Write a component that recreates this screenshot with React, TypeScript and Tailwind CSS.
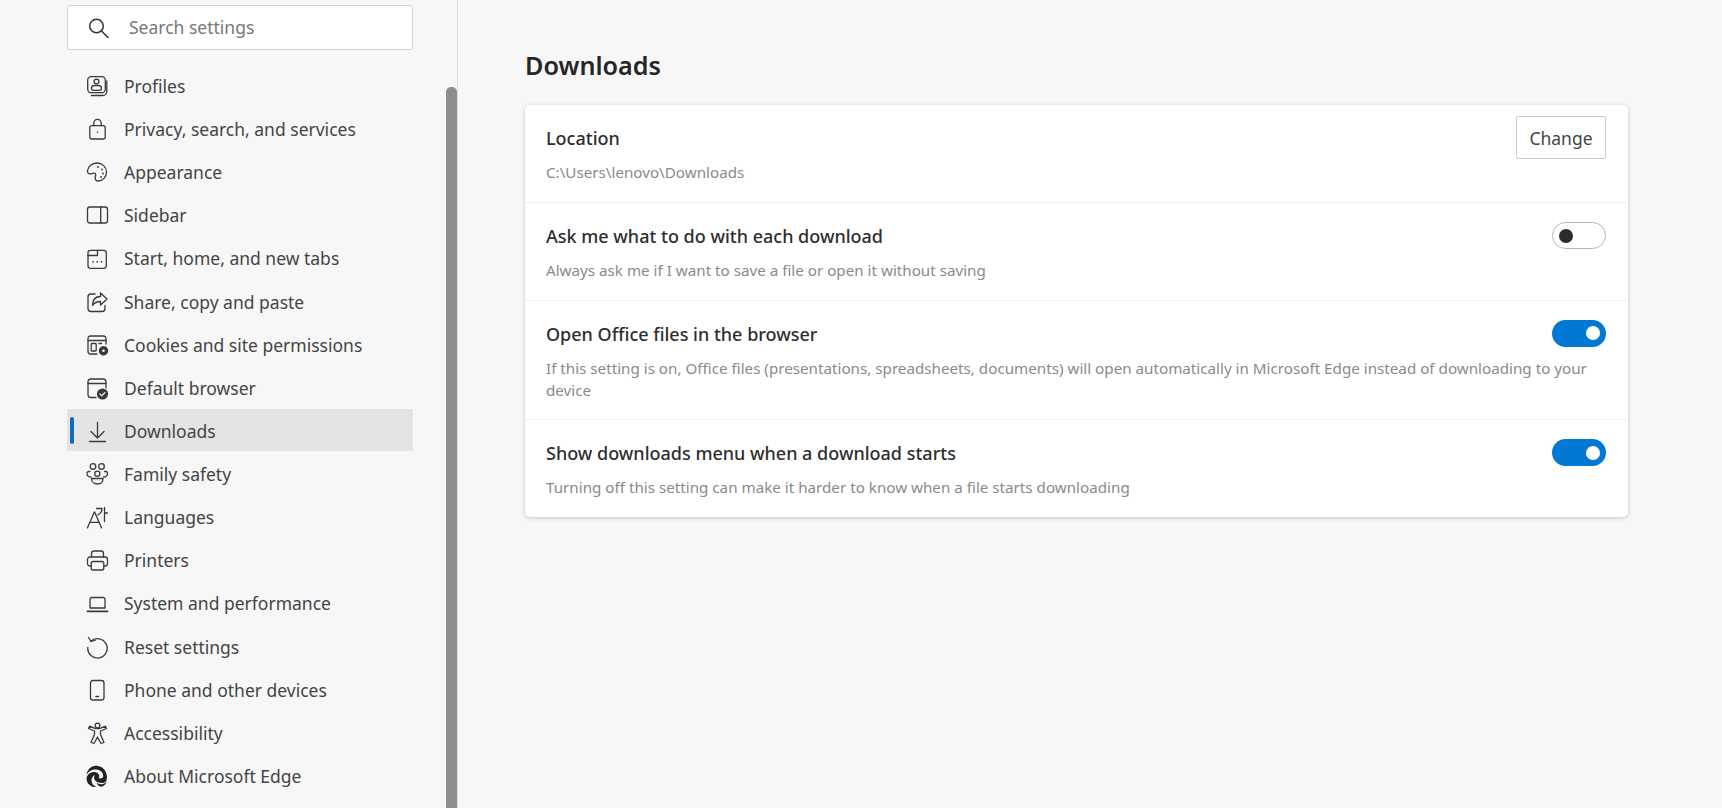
import React from "react";

const S = ({ children }: { children: React.ReactNode }) => (
  <svg viewBox="0 0 24 24" width="24" height="24" fill="none" stroke="#3a3a3a" strokeWidth="1.3" strokeLinecap="round" strokeLinejoin="round" className="relative shrink-0">
    {children}
  </svg>
);

const d = "#3a3a3a";
const icons: Record<string, React.ReactNode> = {
  Profiles: (<S><rect x="2.700" y="2.700" width="17.600" height="16" rx="3.500" /><path d="M21.800 7v10.500a4 4 0 0 1-4 4H6.500" /><circle cx="11.500" cy="7.500" r="2.400" /><path d="M6.500 14.500c0-2 1.500-3 3-3h4c1.500 0 3 1 3 3 0 1-1 1.800-2.500 1.800h-5C7.500 16.300 6.500 15.500 6.500 14.500z" /></S>),
  Privacy: (<S><rect x="4.800" y="8.700" width="15.400" height="13.300" rx="2" /><path d="M8.800 8.700V6a3.700 3.700 0 0 1 7.400 0v2.700" /><circle cx="12.500" cy="15.300" r="0.800" fill={d} stroke="none" /></S>),
  Appearance: (<S><path d="M12 3c5.300 0 9.500 4 9.500 9s-3.900 9-8 9c-2.400 0-3.300-1.500-3.300-3 0-1.200.5-2 .5-3 0-1.200-1-1.800-2-1.800-1.300 0-2 .7-3.700.7-1.800 0-2.800-1.500-2.500-3.200C3.200 6.700 7 3 12 3z" /><circle cx="13" cy="7" r="0.900" fill={d} stroke="none" /><circle cx="17" cy="9.500" r="0.900" fill={d} stroke="none" /><circle cx="18" cy="13.500" r="0.900" fill={d} stroke="none" /><circle cx="16" cy="17" r="0.900" fill={d} stroke="none" /></S>),
  Sidebar: (<S><rect x="2.500" y="4" width="20" height="16" rx="2.300" /><path d="M15.700 4v16" /></S>),
  Start: (<S><rect x="3" y="3.300" width="18.300" height="18" rx="2.500" /><path d="M3 8.500h9.500V3.300" /><circle cx="8" cy="14.800" r="0.900" fill={d} stroke="none" /><circle cx="12.200" cy="14.800" r="0.900" fill={d} stroke="none" /><circle cx="16.400" cy="14.800" r="0.900" fill={d} stroke="none" /></S>),
  Share: (<S><path d="M10 4H6a3 3 0 0 0-3 3v11.500a3 3 0 0 0 3 3h11a3 3 0 0 0 3-3v-3" /><path d="M15.500 3l6.500 6-6.500 6v-3.500c-3.700 0-6 1-8 4 0-5 2.500-9 8-9z" /></S>),
  Cookies: (<S><path d="M12 21H5.500A2.500 2.500 0 0 1 3 18.500V5.500A2.500 2.500 0 0 1 5.500 3h13A2.500 2.500 0 0 1 21 5.500V11" /><path d="M3 7.500h18" /><rect x="6.200" y="10.500" width="5" height="7.500" rx="0.800" /><path d="M14 10.500h2.500" /><circle cx="18.500" cy="17.800" r="3.800" fill={d} stroke={d} strokeWidth="1.800" strokeDasharray="1.600 0.800" /><circle cx="18.500" cy="17.800" r="1.300" fill="#f7f7f7" stroke="none" /></S>),
  Default: (<S><path d="M11 21.500H6a3 3 0 0 1-3-3V6a3 3 0 0 1 3-3h12a3 3 0 0 1 3 3v6" /><path d="M3 7.500h18" /><circle cx="17.500" cy="18" r="5.600" fill={d} stroke="none" /><path d="M15 18l1.800 1.800 3.200-3.400" stroke="#f7f7f7" strokeWidth="1.200" /></S>),
  Downloads: (<S><path d="M12.500 3.500v15M6 12.500l6.500 6.500 6.500-6.500" /><path d="M4.500 22.500h16" /></S>),
  Family: (<S><circle cx="8" cy="4.500" r="2.800" /><circle cx="16.500" cy="4.500" r="2.800" /><circle cx="12.300" cy="11.800" r="2.600" /><path d="M5 9.500H3.800C2.500 9.500 2 10.500 2 11.500c0 2 1.500 3.500 4 3.500" /><path d="M19.500 9.500h1.200c1.300 0 1.800 1 1.800 2 0 2-1.500 3.500-4 3.500" /><path d="M6.500 16.500h11.500c0 3.500-2.500 5.500-5.700 5.500s-5.800-2-5.800-5.500z" /></S>),
  Languages: (<S><path d="M2.500 22.800L9.500 6.800l7 16M5 17.300h9" /><path d="M11.500 3.500h5.500c0 3-1.500 5-4 6.300" /><path d="M19.500 2.500v14M19.500 8h3" /></S>),
  Printers: (<S><path d="M6.500 9V5.500a2.500 2.500 0 0 1 2.500-2.500h7a2.500 2.500 0 0 1 2.500 2.500V9" /><path d="M6 18H5a2.500 2.500 0 0 1-2.500-2.500V11.500A2.500 2.500 0 0 1 5 9h15a2.500 2.500 0 0 1 2.500 2.500v4A2.500 2.500 0 0 1 20 18h-1" /><rect x="6.200" y="13.500" width="12.600" height="8.500" rx="2" /></S>),
  System: (<S><path d="M5 16V7.500A2 2 0 0 1 7 5.500h11a2 2 0 0 1 2 2V16z" /><path d="M2.500 19.300h20" strokeWidth="1.800" /></S>),
  Reset: (<S><path d="M5.800 6.300A9.700 9.700 0 1 1 2.800 12.500" /><path d="M3.500 2.500l2.500 4 4.200-1.300" /></S>),
  Phone: (<S><rect x="5.500" y="2.500" width="13.500" height="19.500" rx="2.500" /><path d="M11 18.500h2.500" strokeWidth="1.600" /></S>),
  Accessibility: (<S><circle cx="12.500" cy="4.500" r="2.400" /><path d="M3.500 7.500l6 2.500v3.500L6 21.500l3 1 3.500-6.500 3.500 6.500 3-1-3.500-8V10l6-2.500-1-2.300-6 2.500H10.500L4.500 5.200z" /></S>),
  About: (
    <svg viewBox="0 0 24 24" width="24" height="24" className="shrink-0">
      <path fill="#222" d="M12.200 1.500C6.300 1.500 1.900 5.700 1.600 11c1.600-3.400 5-5.400 8.600-5.400 4.300 0 8.300 2.600 8 6.600-.1 1.300-1 2.200-2.800 2.200-1.200 0-1.900-.3-1.900-.3.500-.5.800-1.100.8-1.800 0-2.700-3-4.200-5.500-4.200-3.900 0-7.200 3.200-7.200 6.900 0 4.500 4.500 8.600 9.600 8 -3-1-4.700-3.800-4.700-6.400 0-3.200 2.200-5.200 3.300-5.500-1 1.500-1 3.300 0 4.900 1.500 2.200 4.300 3 7.400 3 3.300 0 4.800-3 4.800-6.100 0-6-4.900-10.900-9.800-10.900z" />
      <path fill="#222" d="M22.300 15.800c-1.300 3.200-3.200 4.600-6.300 4.400-1.800-.1-3.200-.7-4.300-1.700.3 2 2 4.200 4.500 4.200 3 0 5.300-3.500 6.100-6.900z" />
    </svg>
  ),
};

const nav: [string, string][] = [
  ["Profiles", "Profiles"],
  ["Privacy", "Privacy, search, and services"],
  ["Appearance", "Appearance"],
  ["Sidebar", "Sidebar"],
  ["Start", "Start, home, and new tabs"],
  ["Share", "Share, copy and paste"],
  ["Cookies", "Cookies and site permissions"],
  ["Default", "Default browser"],
  ["Downloads", "Downloads"],
  ["Family", "Family safety"],
  ["Languages", "Languages"],
  ["Printers", "Printers"],
  ["System", "System and performance"],
  ["Reset", "Reset settings"],
  ["Phone", "Phone and other devices"],
  ["Accessibility", "Accessibility"],
  ["About", "About Microsoft Edge"],
];

function Toggle({ on }: { on: boolean }) {
  return on ? (
    <div className="-mt-[2px] flex h-[27px] w-[54px] shrink-0 items-center justify-end rounded-full bg-[#0078d4] pr-[6px]">
      <div className="h-[14px] w-[14px] rounded-full bg-white" />
    </div>
  ) : (
    <div className="-mt-[2px] flex h-[27px] w-[54px] shrink-0 items-center rounded-full border border-[#b5b5b5] bg-white pl-[6px]">
      <div className="h-[14px] w-[14px] rounded-full bg-[#2b2b2b]" />
    </div>
  );
}

function Row({ title, sub, on, last }: { title: string; sub: string; on: boolean; last?: boolean }) {
  return (
    <div className={`pl-[21px] pr-[22px] pt-[21px] ${last ? "pb-[19px]" : "border-b border-[#f0f0f0] pb-[18.5px]"}`}>
      <div className="flex h-[24px] items-start justify-between">
        <div className="text-[18px] leading-[24px] font-medium text-[#2e2e2e]">{title}</div>
        <Toggle on={on} />
      </div>
      <div className="mt-[11px] text-[15.2px] leading-[22px] text-[#8a8a8a]">{sub}</div>
    </div>
  );
}

export default function App() {
  return (
    <div className="flex h-[808px] w-full overflow-hidden bg-[#f7f7f7] font-['Noto_Sans','Open_Sans',sans-serif]">
      <aside className="flex h-full w-[458px] shrink-0 border-r border-[#dcdcdc] pl-[67px]">
        <div className="w-[346px] shrink-0 pt-[5px]">
          <div className="flex h-[45px] items-center rounded-[3px] border border-[#d2d2d2] bg-white pl-[18px] text-[17.5px] text-[#777777]">
            <svg viewBox="0 0 24 24" width="24" height="24" fill="none" stroke="#333" strokeWidth="1.500" strokeLinecap="round" className="shrink-0">
              <circle cx="10.500" cy="10" r="6.800" />
              <path d="M15.500 15l6.500 6.500" />
            </svg>
            <span className="ml-[19px]">Search settings</span>
          </div>
          <nav className="mt-[14.500px]">
            {nav.map(([k, label]) => (
              <div
                key={k}
                className="relative flex h-[43.125px] items-center gap-[15px] pl-[18px] text-[17.5px] text-[#444444]"
              >
                {k === "Downloads" && (
                  <div className="absolute inset-x-0 -top-[1px] h-[42.5px] rounded-[2px] bg-[#e4e4e4]">
                    <div className="absolute left-[3px] top-[8px] h-[27px] w-[4px] rounded-full bg-[#0f6cbd]" />
                  </div>
                )}
                {icons[k]}
                <span className="relative">{label}</span>
              </div>
            ))}
          </nav>
        </div>
        <div className="ml-auto w-[11px] shrink-0 pt-[87px]">
          <div className="h-full rounded-t-[5px] bg-[#8e8e8e]" />
        </div>
      </aside>
      <main className="min-w-0 flex-1 pl-[67px] pr-[94px] pt-[48px]">
        <h1 className="text-[25.200px] leading-[34px] font-semibold text-[#262626]">Downloads</h1>
        <div className="mt-[23px] overflow-hidden rounded-[5px] bg-white shadow-[0_1px_4px_rgba(0,0,0,0.2)]">
          <div className="flex items-start justify-between border-b border-[#f0f0f0] pl-[21px] pr-[22px] pt-[11px] pb-[19px]">
            <div className="pt-[10px]">
              <div className="text-[18px] leading-[24px] font-medium text-[#2e2e2e]">Location</div>
              <div className="mt-[11px] text-[15.200px] leading-[22px] text-[#8a8a8a]">C:\Users\lenovo\Downloads</div>
            </div>
            <div className="flex h-[43px] w-[90px] items-center justify-center rounded-[2px] border border-[#c9c9c9] bg-white pt-[1px] text-[17.500px] text-[#444444]">Change</div>
          </div>
          <Row title="Ask me what to do with each download" sub="Always ask me if I want to save a file or open it without saving" on={false} />
          <Row title="Open Office files in the browser" sub="If this setting is on, Office files (presentations, spreadsheets, documents) will open automatically in Microsoft Edge instead of downloading to your device" on />
          <Row title="Show downloads menu when a download starts" sub="Turning off this setting can make it harder to know when a file starts downloading" on last />
        </div>
      </main>
    </div>
  );
}
